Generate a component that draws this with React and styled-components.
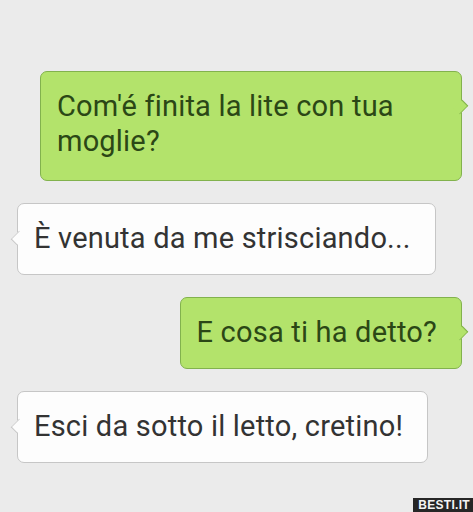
import React from "react";
import styled, { createGlobalStyle, css } from "styled-components";

const Global = createGlobalStyle`
  html, body { margin: 0; padding: 0; }
  body { background: #ebebeb; font-family: Roboto, "Liberation Sans", sans-serif; }
`;

const Page = styled.div`
  position: relative;
  width: 473px;
  height: 512px;
  box-sizing: border-box;
  padding: 71px 11px 0 17px;
  display: flex;
  flex-direction: column;
  gap: 22px;
  overflow: hidden;
`;

const Bubble = styled.div`
  position: relative;
  box-sizing: border-box;
  max-width: ${(p) => p.$max || 440}px;
  width: fit-content;
  padding: 17px 24px ${(p) => (p.$max ? 21 : 18)}px 16px;
  border-radius: 7px;
  font-size: 29px;
  line-height: 35px;
  letter-spacing: 0.2px;
  ${(p) =>
    p.$out
      ? css`
          align-self: flex-end;
          background: #b3e36b;
          border: 1px solid #82b24d;
          color: #2b4716;
          &::after {
            content: "";
            position: absolute;
            right: -6px;
            top: 29px;
            width: 11px;
            height: 11px;
            background: #b3e36b;
            border-top: 1px solid #82b24d;
            border-right: 1px solid #82b24d;
            transform: rotate(45deg) scaleX(0.7);
          }
        `
      : css`
          align-self: flex-start;
          background: #fdfdfd;
          border: 1px solid #c6c6c6;
          color: #333333;
          &::after {
            content: "";
            position: absolute;
            left: -6px;
            top: 28px;
            width: 11px;
            height: 11px;
            background: #fdfdfd;
            border-bottom: 1px solid #c6c6c6;
            border-left: 1px solid #c6c6c6;
            transform: rotate(45deg) scaleX(0.7);
          }
        `}
`;

const Badge = styled.div`
  position: absolute;
  right: 0;
  bottom: 0;
  background: #262626;
  color: #f4f4f4;
  font-family: "Liberation Sans", Arial, sans-serif;
  font-weight: bold;
  font-size: 12px;
  line-height: 14px;
  padding: 0 3px 0 5px;
  letter-spacing: 0.3px;
`;

const messages = [
  { out: true, text: "Com'é finita la lite con tua moglie?", max: 422 },
  { out: false, text: "È venuta da me strisciando..." },
  { out: true, text: "E cosa ti ha detto?" },
  { out: false, text: "Esci da sotto il letto, cretino!" },
];

export default function App() {
  return (
    <>
      <Global />
      <Page>
        {messages.map((m, i) => (
          <Bubble key={i} $out={m.out} $max={m.max}>
            {m.text}
          </Bubble>
        ))}
        <Badge>BESTI.IT</Badge>
      </Page>
    </>
  );
}
